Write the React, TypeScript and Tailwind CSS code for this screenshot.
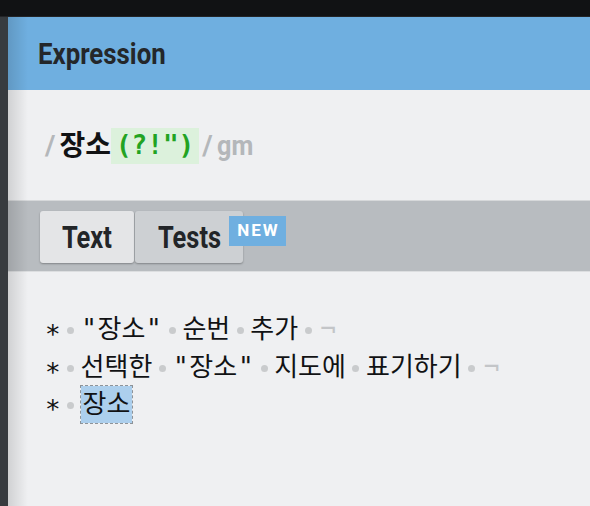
import React from "react";

const Dot = () => (
  <span className="inline-flex w-[20px] justify-center items-center align-middle">
    <span className="block w-[7px] h-[7px] rounded-full bg-[#c9cbcd]" />
  </span>
);

const Q = () => <span className="inline-block w-[17px] text-center">"</span>;

const Star = () => <span className="inline-block w-[15.6px] text-center">∗</span>;

const Eol = () => <span className="text-[#c3c5c8] ml-[2px]">¬</span>;

export default function App() {
  return (
    <div className="w-[590px] h-[506px] flex flex-col bg-[#111214] overflow-hidden">
      <div className="h-[17px] shrink-0 bg-[#111214] border-b border-[#232427]" />
      <div className="flex flex-1 min-h-0">
        <div className="w-[8px] shrink-0 bg-[#373b3f]" />
        <div className="flex-1 flex flex-col bg-[#eff0f2] relative">
          {/* header */}
          <div className="h-[73px] shrink-0 bg-[#6fafe0] flex items-center pl-[30px]">
            <span
              className="inline-block origin-left scale-x-[0.86] text-[30px] font-bold text-[#24272a]"
              style={{ fontFamily: "Roboto, sans-serif" }}
            >
              Expression
            </span>
          </div>
          {/* expression */}
          <div
            className="h-[110px] shrink-0 flex items-center pl-[37px] text-[28px] font-bold pt-[1px]"
            style={{ fontFamily: "Roboto, 'Noto Sans CJK KR', sans-serif" }}
          >
            <span className="text-[#b4b7ba]">/</span>
            <span className="text-[#111214] ml-[4px]">장소</span>
            <span
              className="bg-[#dcf1dc] text-[#22a322] h-[36px] flex items-center px-[5px] text-[26px]"
              style={{ fontFamily: "'DejaVu Sans Mono', monospace" }}
            >
              (?!")
            </span>
            <span className="text-[#b4b7ba] ml-[3px]">/</span>
            <span className="text-[#b4b7ba] ml-[4px] inline-block origin-left scale-x-[0.9]">gm</span>
          </div>
          {/* tabs */}
          <div className="h-[72px] shrink-0 bg-[#b8bcc0] border-t border-[#d6d8da] border-b border-b-[#dcdee0] flex items-start pt-[10px] pl-[32px]">
            <div className="w-[94px] h-[52px] rounded-[3px] bg-[#e4e5e7] shadow-[0_1px_2px_rgba(0,0,0,0.3)] flex items-center pl-[22px]">
              <span
                className="inline-block origin-left scale-x-[0.82] text-[31px] font-bold text-[#222528] leading-none"
                style={{ fontFamily: "Roboto, sans-serif" }}
              >
                Text
              </span>
            </div>
            <div className="relative w-[108px] h-[52px] ml-[1px] rounded-[3px] bg-[#cdd0d3] shadow-[0_1px_2px_rgba(0,0,0,0.3)] flex items-center pl-[23px]">
              <span
                className="inline-block origin-left scale-x-[0.82] text-[31px] font-bold text-[#222528] leading-none"
                style={{ fontFamily: "Roboto, sans-serif" }}
              >
                Tests
              </span>
              <span
                className="absolute left-[94px] top-[5px] w-[57px] h-[30px] bg-[#6fafe0] text-white text-[17px] font-bold tracking-[2px] flex items-center justify-center pl-[2px]"
                style={{ fontFamily: "Roboto, sans-serif" }}
              >
                NEW
              </span>
            </div>
          </div>
          {/* text */}
          <div
            className="flex-1 pt-[39px] pl-[37px] text-[26px] leading-[37.5px] text-[#111214]"
            style={{ fontFamily: "'DejaVu Sans Mono', 'Noto Sans CJK KR', monospace" }}
          >
            <div className="whitespace-nowrap">
              <Star />
              <Dot />
              <Q />
              장소
              <Q />
              <Dot />
              순번
              <Dot />
              추가
              <Dot />
              <Eol />
            </div>
            <div className="whitespace-nowrap">
              <Star />
              <Dot />
              선택한
              <Dot />
              <Q />
              장소
              <Q />
              <Dot />
              지도에
              <Dot />
              표기하기
              <Dot />
              <Eol />
            </div>
            <div className="whitespace-nowrap">
              <Star />
              <Dot />
              <span className="inline-block bg-[#accfed] outline outline-1 outline-dashed outline-[#8e9398] px-[2px] leading-[37px]">
                장소
              </span>
            </div>
          </div>
          {/* left inner shadow */}
          <div className="absolute left-0 top-0 bottom-0 w-[20px] pointer-events-none bg-gradient-to-r from-[rgba(0,0,0,0.13)] to-transparent" />
        </div>
      </div>
    </div>
  );
}
